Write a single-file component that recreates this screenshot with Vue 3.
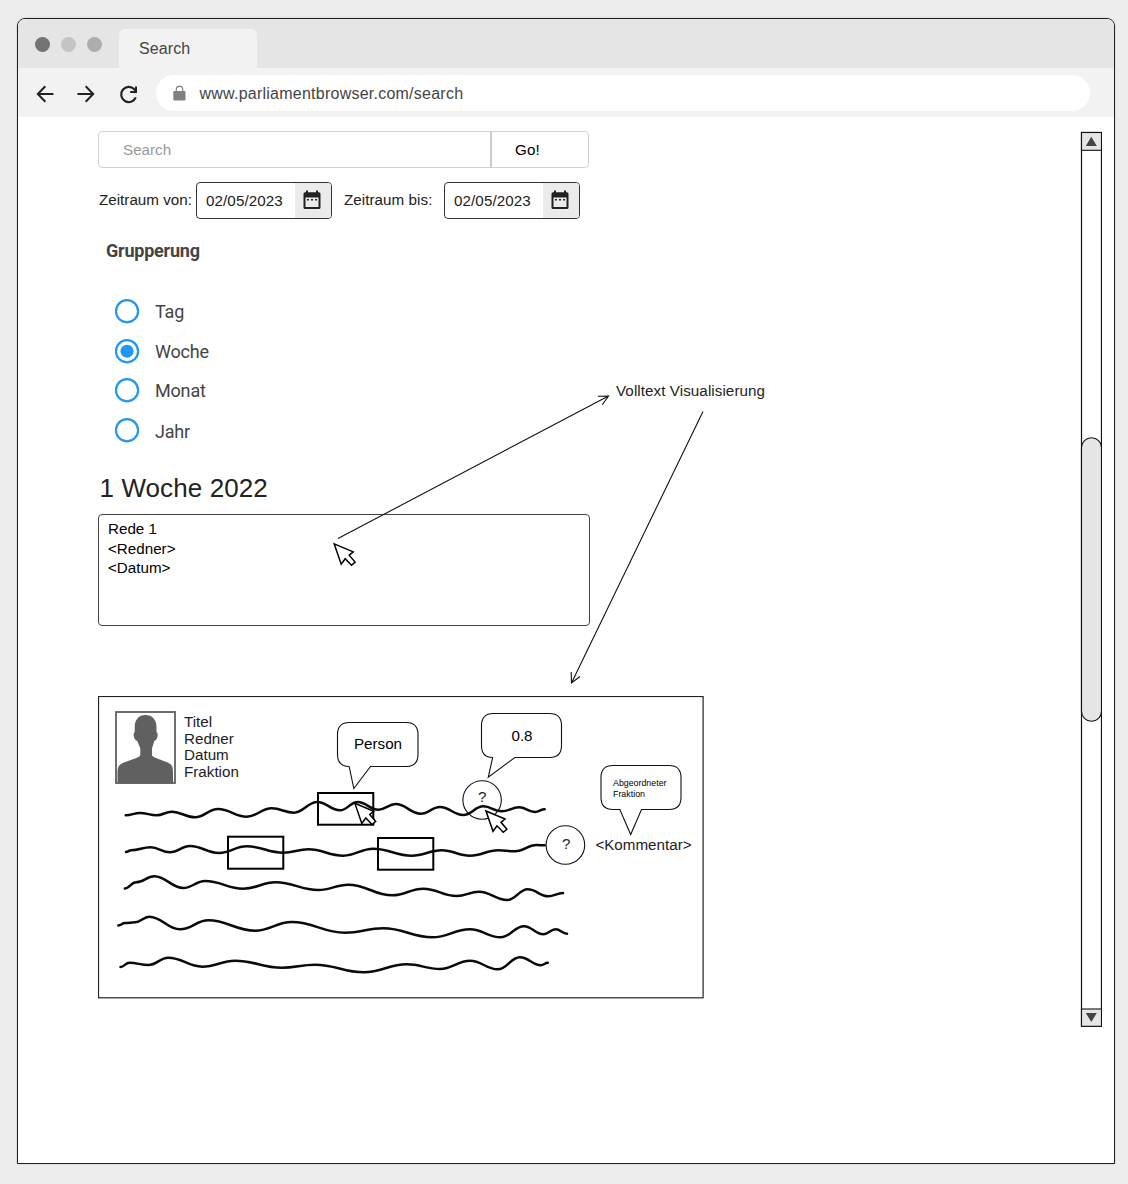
<script setup>
import { ref } from 'vue'

const grouping = ref('Woche')
const groupings = ['Tag', 'Woche', 'Monat', 'Jahr']

const range = [
  { id: 'from', label: 'Zeitraum von:', value: '02/05/2023' },
  { id: 'to', label: 'Zeitraum bis:', value: '02/05/2023' },
]

// Turning points of each scribbled text line
const scribbles = [
  [[125.7, 815.3], [140, 813], [156.7, 815.3], [171.7, 811.7], [195, 817.3], [218, 809], [246.7, 816.7], [271.7, 808.3], [294, 812.7], [317.3, 802], [340, 810.3], [357.7, 802], [378.3, 809.7], [395.7, 804], [420.7, 813.7], [440, 807], [463.3, 815], [483.3, 806.3], [501.7, 811.3], [519, 807.3], [535, 812], [544.7, 809.3]],
  [[126, 852], [131, 850.3], [150.7, 847.3], [170, 852.3], [190, 846], [219, 853], [246.7, 846.3], [283.3, 852.7], [308.3, 849.3], [343.3, 855.7], [373.3, 848.7], [411.7, 855.7], [441.7, 850.3], [470, 855.7], [498.3, 850.3], [515, 851.3], [536.7, 845], [544.7, 845.3]],
  [[124.8, 888.5], [136, 882.3], [154.3, 876.3], [183.3, 888], [205, 881], [243.3, 888.7], [275.7, 882.3], [318.3, 890], [348.3, 884.7], [392.3, 895.3], [423.3, 888.7], [456.7, 896], [479, 891.7], [507.3, 900], [527.7, 889.3], [548.3, 896.3], [563, 892.9]],
  [[118.3, 925.5], [125, 923], [135, 922.3], [149.3, 916.7], [180, 929.3], [208.3, 920.3], [255, 930.7], [291.7, 922], [345, 932.7], [383.3, 928.3], [432.3, 937.3], [470, 929.3], [500.7, 937.3], [524, 926.3], [543.3, 934.3], [555.7, 929.3], [567, 933.8]],
  [[120.5, 967], [129.3, 962.7], [148.3, 965], [168.3, 957.7], [202.3, 966.7], [235, 960.7], [281.7, 967.7], [315, 964.7], [364, 972.3], [406.7, 964.3], [440, 969], [470, 960.7], [497.7, 969.3], [520, 957.3], [541, 965.3], [547.8, 962.8]],
]

function wave(points) {
  let d = `M${points[0]}`
  for (let i = 1; i < points.length; i++) {
    const [x0, y0] = points[i - 1]
    const [x1, y1] = points[i]
    const k = (x1 - x0) * 0.42
    d += `C${x0 + k} ${y0} ${x1 - k} ${y1} ${x1} ${y1}`
  }
  return d
}

const cursor = 'M0 0L19 8L15 11.3L20.9 18.2L17.3 21.3L11 14.8L7 20.3Z'
</script>

<template>
  <div class="desktop">
    <div class="window">
      <header class="tabs">
        <span class="dot dark"></span>
        <span class="dot light"></span>
        <span class="dot mid"></span>
        <div class="tab">Search</div>
      </header>

      <nav class="toolbar">
        <svg class="nav-icons" width="138" height="49" viewBox="18 68 138 49">
          <g fill="none" stroke="#222" stroke-width="2">
            <path d="M53.5 94H38.5M45.3 86.3L37.8 94L45.3 101.7" />
            <path d="M77.5 94H93M85.7 86.3L93.2 94L85.7 101.7" />
            <path d="M135.8 97.4A7.6 7.6 0 1 1 134.3 89.3L136.4 91.6" stroke-width="2.2" />
            <path d="M136 86.5V92H130.2" />
          </g>
        </svg>
        <div class="address">
          <svg width="13" height="16" viewBox="0 0 13 16">
            <path d="M3.3 7V4.3a3.2 3.2 0 0 1 6.4 0V7" fill="none" stroke="#808080" stroke-width="1.2" />
            <rect x=".3" y="6" width="12.2" height="9.5" rx="1" fill="#808080" />
          </svg>
          <span>www.parliamentbrowser.com/search</span>
        </div>
      </nav>

      <main class="page">
        <section class="content">
          <div class="search">
            <div class="field">Search</div>
            <div class="go">Go!</div>
          </div>

          <div class="range">
            <template v-for="r in range" :key="r.id">
              <label :class="r.id">{{ r.label }}</label>
              <div class="date">
                <span>{{ r.value }}</span>
                <i>
                  <svg width="18" height="20" viewBox="0 0 18 20">
                    <path fill="#222" fill-rule="evenodd" d="M3 .5H5V2.300H13V.5H15V2.300H16a1.500 1.500 0 0 1 1.500 1.500V17.500a1.500 1.500 0 0 1-1.500 1.500H2A1.500 1.500 0 0 1 .5 17.500V3.800A1.500 1.500 0 0 1 2 2.300H3ZM2.500 7.500V17H15.500V7.500ZM4 9H6V10.600H4ZM8 9H10V10.600H8ZM12 9H14V10.600H12Z" />
                  </svg>
                </i>
              </div>
            </template>
          </div>

          <h2>Grupperung</h2>
          <div class="radios">
            <div v-for="g in groupings" :key="g" class="radio" @click="grouping = g">
              <svg width="25" height="25" viewBox="0 0 25 25">
                <circle cx="12" cy="12.2" r="11.1" fill="none" stroke="#2196f3" stroke-width="2.2" />
                <circle v-if="grouping === g" cx="12" cy="12.2" r="6.5" fill="#2196f3" />
              </svg>
              <span>{{ g }}</span>
            </div>
          </div>

          <h1>1 Woche 2022</h1>
          <article class="speech">
            <div>Rede 1</div>
            <div>&lt;Redner&gt;</div>
            <div>&lt;Datum&gt;</div>
          </article>

          <svg class="sketch" width="606" height="303" viewBox="98 696 606 303">
            <rect x="98.5" y="696.5" width="604.6" height="301.3" fill="#fff" stroke="#222" stroke-width="1.2" />

            <rect x="116" y="712" width="59" height="71" fill="#fff" stroke="#606060" stroke-width="1.8" />
            <path fill="#606060" d="M117.5 783.5V772C117.5 766 120 764 124.5 762.3L135 758.5Q140.3 756.5 140.3 755V748.5L137.3 741Q134 740 133.6 735Q133.6 732.5 134.7 732V727C134.7 719.5 139 715 145.5 715S156.5 719.5 156.5 727V732Q157.7 732.5 157.7 735Q157.3 740 154.3 741L152 748.5V755Q152 756.5 157.3 758.5L167 762.3C171.5 764 173 766 173 772V783.5Z" />

            <g>
              <text x="184" y="727">Titel</text>
              <text x="184" y="744">Redner</text>
              <text x="184" y="760">Datum</text>
              <text x="184" y="777">Fraktion</text>
            </g>

            <g fill="#fff" stroke="#111" stroke-width="1.1">
              <circle cx="482.1" cy="800" r="19.2" />
              <circle cx="565.4" cy="845" r="19.3" />
              <path d="M349.5 766.5Q337.5 766.5 337.5 754.5V734.5Q337.5 722.5 349.5 722.5H406Q418 722.5 418 734.5V754.5Q418 766.5 406 766.5H370.5L353.8 788.5L349.2 766.5Z" />
              <path d="M492.6 757.5Q481.5 757.5 481.5 745.5V725.5Q481.5 713.5 493.5 713.5H549.5Q561.5 713.5 561.5 725.5V745.5Q561.5 757.5 549.5 757.5H514.8L488.3 777.3L492.6 757.5Z" />
              <path d="M613 809.5Q601 809.5 601 797.5V777.5Q601 765.5 613 765.5H669Q681 765.5 681 777.5V797.5Q681 809.5 669 809.5H641.5L630.7 834.5L619.8 809.5Z" />
            </g>

            <g fill="none" stroke="#000" stroke-width="2">
              <rect x="318" y="793" width="55.3" height="31.7" />
              <rect x="228" y="836.7" width="55.3" height="32" />
              <rect x="378" y="838" width="55.3" height="31.7" />
            </g>

            <g fill="none" stroke="#0a0a0a" stroke-width="2.5" stroke-linecap="round">
              <path v-for="(s, i) in scribbles" :key="i" :d="wave(s)" />
            </g>

            <g fill="#fff" stroke="#000" stroke-width="1.5">
              <path :d="cursor" transform="translate(354.8 803.2)" />
              <path :d="cursor" transform="translate(486 811)" />
            </g>

            <g text-anchor="middle">
              <text x="378" y="749" fill="#000">Person</text>
              <text x="522" y="741" fill="#000">0.8</text>
              <text x="482.2" y="802">?</text>
              <text x="566.2" y="849">?</text>
              <text x="643.5" y="850">&lt;Kommentar&gt;</text>
            </g>
            <g class="tiny">
              <text x="613" y="786" textLength="53.5" lengthAdjust="spacingAndGlyphs">Abgeordneter</text>
              <text x="613" y="797" textLength="32" lengthAdjust="spacingAndGlyphs">Fraktion</text>
            </g>
          </svg>
        </section>

        <svg class="scrollbar" width="22" height="896" viewBox="1080 131 22 896">
          <rect x="1081.5" y="132.5" width="20" height="893.7" fill="#fff" stroke="#111" stroke-width="1.2" />
          <rect x="1081.5" y="132.5" width="20" height="17.8" fill="#e5e5e5" stroke="#111" stroke-width="1.1" />
          <rect x="1081.5" y="1009" width="20" height="17.3" fill="#e5e5e5" stroke="#111" stroke-width="1.1" />
          <path d="M1091.3 136.7L1096.8 146H1085.8ZM1091.3 1022L1096.8 1013H1085.8Z" fill="#444" />
          <rect x="1081.5" y="437.8" width="20" height="283.5" rx="10" fill="#e5e5e5" stroke="#111" stroke-width="1.1" />
        </svg>
      </main>
    </div>

    <svg class="notes" width="1128" height="1184" viewBox="0 0 1128 1184">
      <g fill="none" stroke="#111" stroke-width="1.1">
        <path d="M338 538.5L608.5 396M597.8 396.2L608.5 396L602.3 404.7" />
        <path d="M703 411.5L571.5 683M571.2 672L571.5 683L580 676.5" />
      </g>
      <path :d="cursor" transform="translate(334.2 543.9)" fill="#fff" stroke="#000" stroke-width="1.5" />
      <text x="616" y="396" textLength="149">Volltext Visualisierung</text>
    </svg>
  </div>
</template>

<style>
body { margin: 0; background: #ededed; }
</style>

<style scoped>
.desktop {
  position: relative;
  box-sizing: border-box;
  height: 1184px;
  padding: 18px 13px 0 17px;
  background: #ededed;
  color: #222;
  font: 15.2px/18px "Liberation Sans", Arial, sans-serif;
}
.window {
  box-sizing: border-box;
  width: 1098px;
  height: 1146px;
  border: 1px solid #222;
  border-radius: 8px 8px 0 0;
  overflow: hidden;
  background: #fff;
  box-shadow: 0 0 0 1px #dedede;
}
.tabs {
  display: flex;
  align-items: flex-start;
  height: 49px;
  padding-left: 17px;
  background: #e5e5e5;
}
.dot { width: 15px; height: 15px; margin: 18px 11px 0 0; border-radius: 50%; }
.dark { background: #737373; }
.light { background: #c4c4c4; }
.mid { background: #adadad; }
.tab {
  box-sizing: border-box;
  width: 138px;
  height: 39px;
  margin: 10px 0 0 6px;
  padding: 11px 20px;
  border-radius: 6px 6px 0 0;
  background: #f2f2f2;
  color: #444;
  font-size: 16px;
  letter-spacing: 0.1px;
}
.toolbar { display: flex; align-items: center; height: 49px; background: #f2f2f2; }
.nav-icons { flex: none; }
.address {
  display: flex;
  align-items: center;
  box-sizing: border-box;
  width: 934px;
  height: 36px;
  padding-left: 16.5px;
  gap: 14px;
  border-radius: 18px;
  background: #fff;
  color: #444;
  font-size: 16px;
  letter-spacing: 0.24px;
}
.address span { padding-top: 2px; }
.page { display: flex; justify-content: space-between; padding: 14px 12px 0 80px; }
.content { width: 606px; }
.search {
  display: flex;
  box-sizing: border-box;
  width: 491px;
  height: 37px;
  border: 1.5px solid #d2d2d2;
  border-radius: 4px;
  line-height: 36px;
}
.field { width: 393px; padding-left: 24px; box-sizing: border-box; border-right: 2px solid #ccc; color: #999; }
.go { padding-left: 23px; color: #000; letter-spacing: 0.1px; }
.range { display: flex; align-items: center; margin-top: 14px; height: 37px; }
.from { width: 98px; padding-left: 1px; }
.to { width: 100px; margin-left: 12px; letter-spacing: 0.05px; }
.range label { box-sizing: border-box; height: 20px; }
.date {
  display: flex;
  box-sizing: border-box;
  width: 136px;
  height: 37px;
  border: 1px solid #333;
  border-radius: 4px;
  overflow: hidden;
  line-height: 36px;
  letter-spacing: 0.08px;
}
.date span { flex: 1; padding-left: 9px; }
.date i {
  display: flex;
  align-items: center;
  justify-content: center;
  box-sizing: border-box;
  width: 36px;
  padding: 0 2px 1px 0;
  background: #ebebeb;
}
h2 { margin: 21px 0 0 8px; font: bold 18px/22px Roboto, sans-serif; color: #444; letter-spacing: -0.22px; }
.radios { display: flex; flex-direction: column; margin: 37px 0 0 17px; gap: 14.6px; }
.radio { display: flex; height: 25px; gap: 15px; color: #444; font: 18px/26px Roboto, sans-serif; letter-spacing: -0.18px; }
.radio:last-child span { padding-top: 1px; }
h1 { margin: 30px 0 0 1.5px; font-size: 26px; line-height: 30px; font-weight: normal; letter-spacing: 0.1px; }
.speech {
  box-sizing: border-box;
  width: 492px;
  height: 112px;
  margin-top: 11px;
  padding: 4px 9px;
  border: 1px solid #444;
  border-radius: 4px;
  color: #000;
  line-height: 19.5px;
}
.speech div:first-child { padding-bottom: 0.5px; }
.speech div:nth-child(2) { line-height: 19px; }
.sketch { display: block; margin-top: 70px; }
.scrollbar { flex: none; }
text { fill: #222; }
text[fill="#000"] { fill: #000; }
.tiny text { font-size: 9.2px; fill: #000; }
.notes { position: absolute; left: 0; top: 0; pointer-events: none; }
</style>
